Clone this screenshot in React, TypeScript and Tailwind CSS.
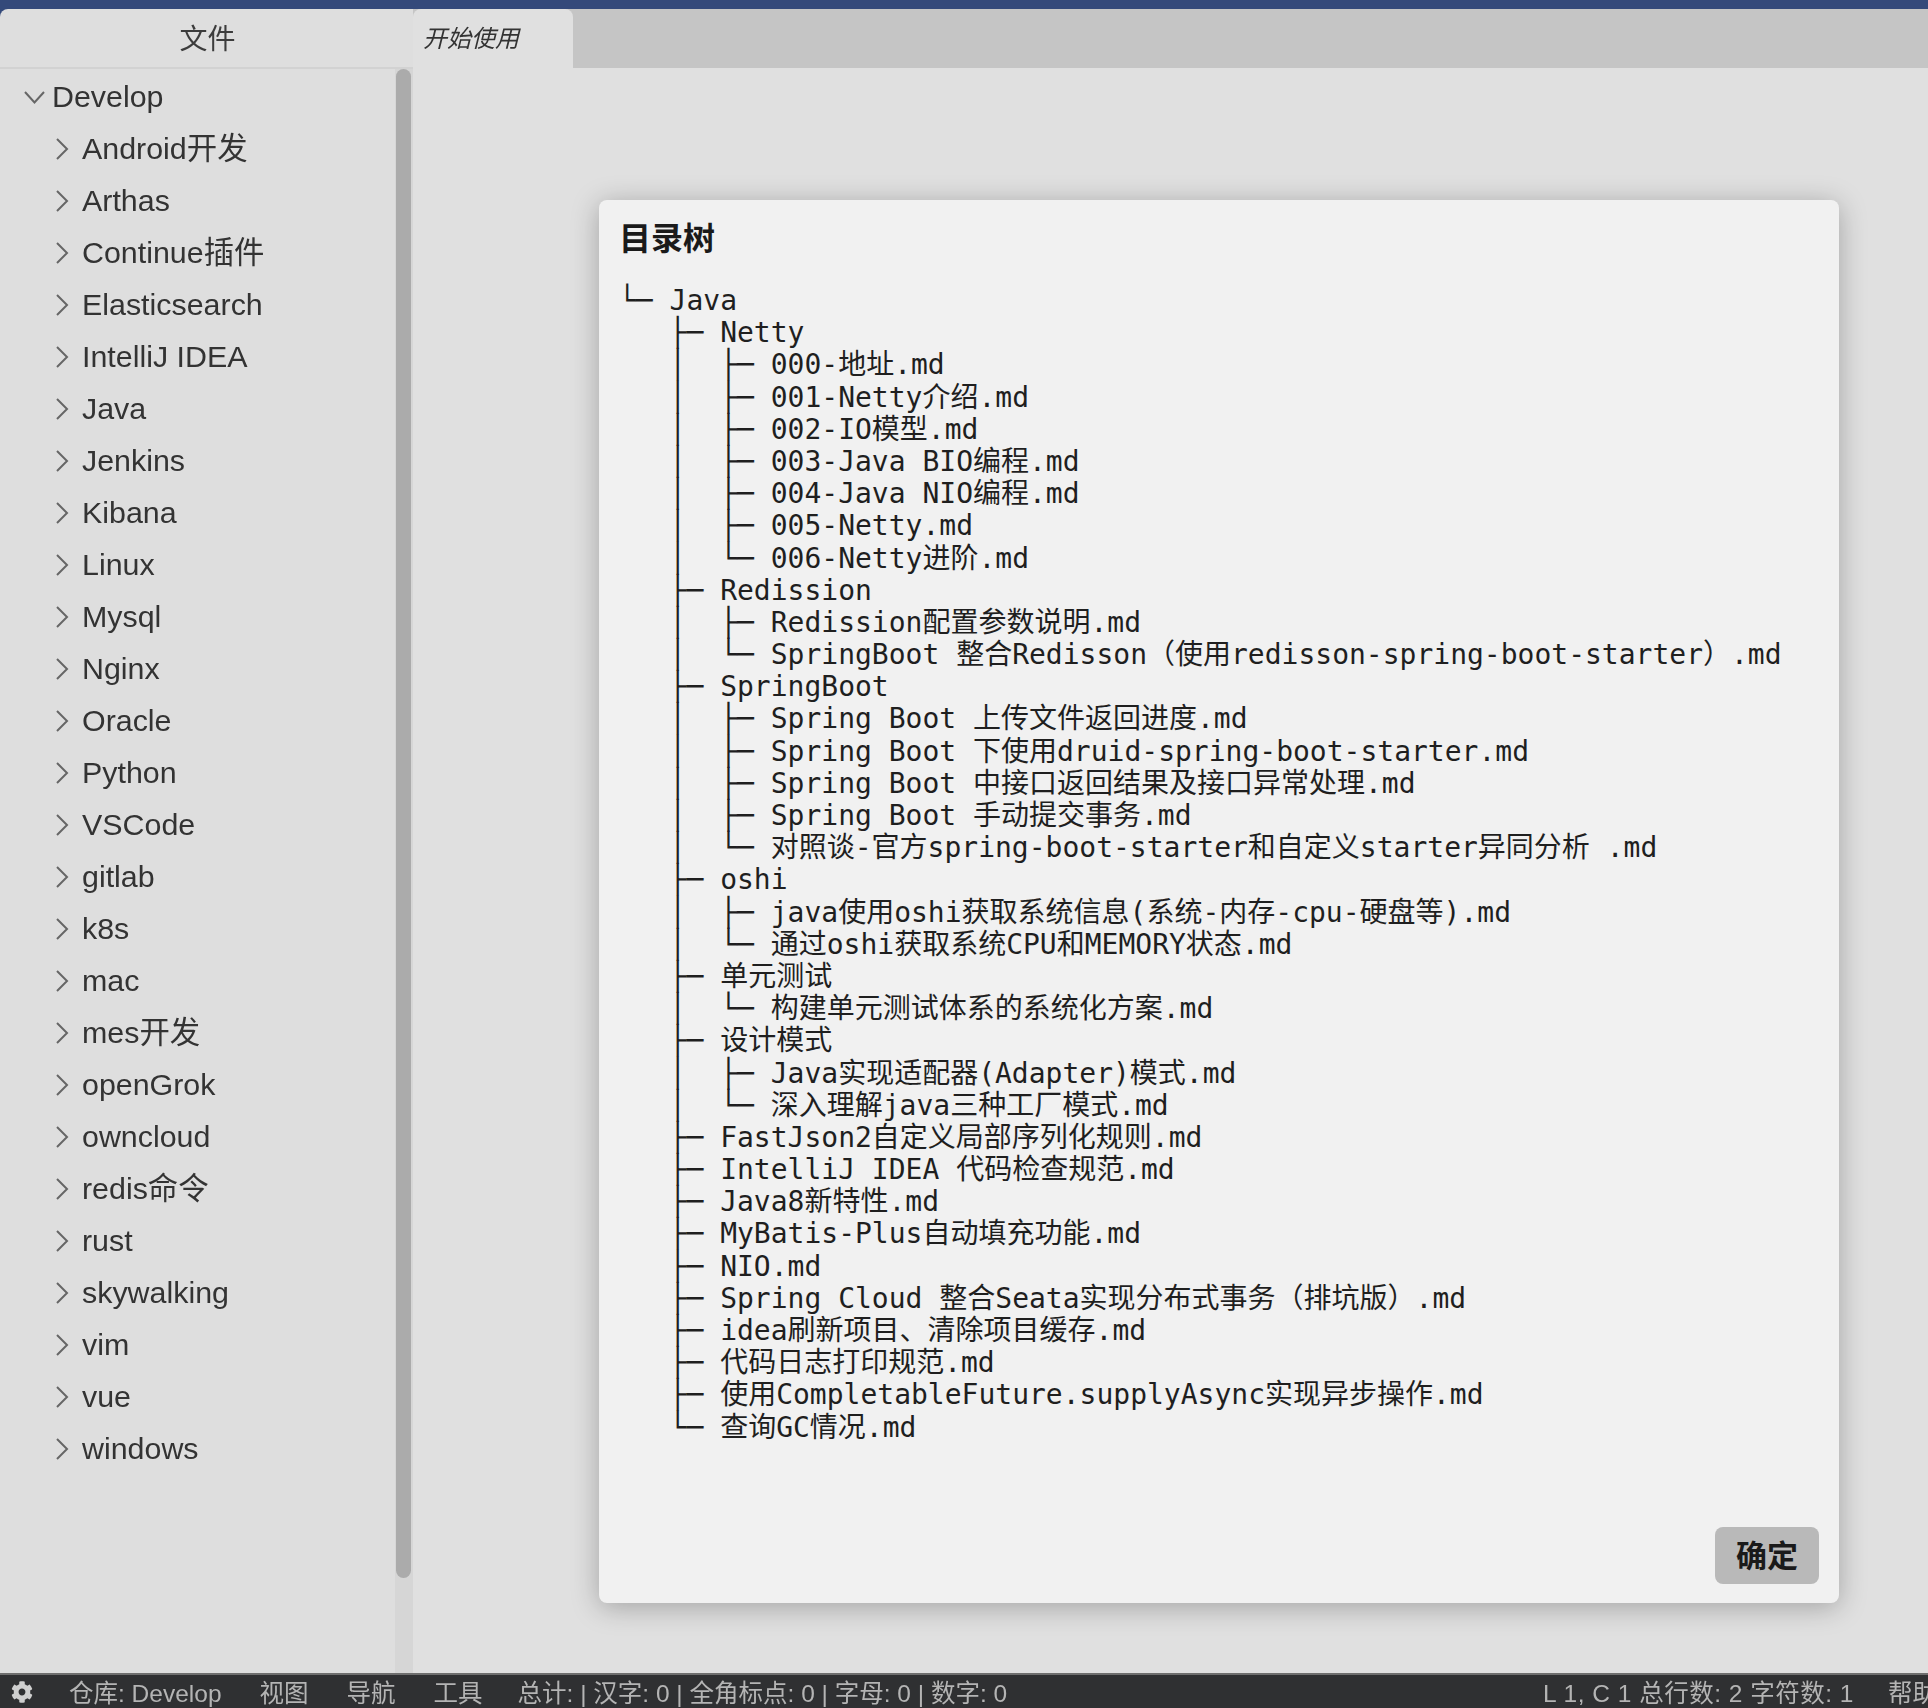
import { FaCog } from "react-icons/fa";

const folders = [
  "Android开发",
  "Arthas",
  "Continue插件",
  "Elasticsearch",
  "IntelliJ IDEA",
  "Java",
  "Jenkins",
  "Kibana",
  "Linux",
  "Mysql",
  "Nginx",
  "Oracle",
  "Python",
  "VSCode",
  "gitlab",
  "k8s",
  "mac",
  "mes开发",
  "openGrok",
  "owncloud",
  "redis命令",
  "rust",
  "skywalking",
  "vim",
  "vue",
  "windows",
];

const tree = [
  "└─ Java",
  "   ├─ Netty",
  "   │  ├─ 000-地址.md",
  "   │  ├─ 001-Netty介绍.md",
  "   │  ├─ 002-IO模型.md",
  "   │  ├─ 003-Java BIO编程.md",
  "   │  ├─ 004-Java NIO编程.md",
  "   │  ├─ 005-Netty.md",
  "   │  └─ 006-Netty进阶.md",
  "   ├─ Redission",
  "   │  ├─ Redission配置参数说明.md",
  "   │  └─ SpringBoot 整合Redisson（使用redisson-spring-boot-starter）.md",
  "   ├─ SpringBoot",
  "   │  ├─ Spring Boot 上传文件返回进度.md",
  "   │  ├─ Spring Boot 下使用druid-spring-boot-starter.md",
  "   │  ├─ Spring Boot 中接口返回结果及接口异常处理.md",
  "   │  ├─ Spring Boot 手动提交事务.md",
  "   │  └─ 对照谈-官方spring-boot-starter和自定义starter异同分析 .md",
  "   ├─ oshi",
  "   │  ├─ java使用oshi获取系统信息(系统-内存-cpu-硬盘等).md",
  "   │  └─ 通过oshi获取系统CPU和MEMORY状态.md",
  "   ├─ 单元测试",
  "   │  └─ 构建单元测试体系的系统化方案.md",
  "   ├─ 设计模式",
  "   │  ├─ Java实现适配器(Adapter)模式.md",
  "   │  └─ 深入理解java三种工厂模式.md",
  "   ├─ FastJson2自定义局部序列化规则.md",
  "   ├─ IntelliJ IDEA 代码检查规范.md",
  "   ├─ Java8新特性.md",
  "   ├─ MyBatis-Plus自动填充功能.md",
  "   ├─ NIO.md",
  "   ├─ Spring Cloud 整合Seata实现分布式事务（排坑版）.md",
  "   ├─ idea刷新项目、清除项目缓存.md",
  "   ├─ 代码日志打印规范.md",
  "   ├─ 使用CompletableFuture.supplyAsync实现异步操作.md",
  "   └─ 查询GC情况.md",
];

const sans = "font-['Liberation_Sans','Noto_Sans_CJK_SC',sans-serif]";

export default function App() {
  return (
    <div className={`flex h-[1708px] w-[1928px] flex-col overflow-hidden bg-[#34497a] ${sans}`}>
      <div className="h-[9px] shrink-0" />
      <div className="flex min-h-0 flex-1">
        {/* file panel */}
        <aside className="flex w-[413px] shrink-0 flex-col rounded-tl-lg bg-[#dedede]">
          <div className="flex h-[60px] shrink-0 items-center justify-center border-b-2 border-[#d2d2d2] pl-[2px] pt-[3px] text-[28px] text-[#3c3c3c] blur-[0.6px]">
            文件
          </div>
          <div className="flex min-h-0 flex-1">
            <div className="min-w-0 flex-1 pt-[2px] text-[#333] blur-[0.6px]">
              <div className="flex h-[52px] items-center pl-[24px] text-[30.4px]">
                <svg viewBox="0 0 21 13" className="mr-[7px] h-[13px] w-[21px] shrink-0 fill-none stroke-[#666] stroke-2">
                  <path d="M1 1 L10.5 11.5 L20 1" />
                </svg>
                Develop
              </div>
              {folders.map((name) => (
                <div key={name} className="flex h-[52px] items-center pl-[55px] text-[30.4px]">
                  <svg viewBox="0 0 14 24" className="mr-[13px] h-[24px] w-[14px] shrink-0 fill-none stroke-[#666] stroke-2">
                    <path d="M2 2 L12 12 L2 22" />
                  </svg>
                  {name}
                </div>
              ))}
            </div>
            <div className="w-[18px] shrink-0 bg-[#d6d6d6] pb-[95px] pl-[1px] pr-[2px]">
              <div className="h-full rounded-full bg-[#ababab]" />
            </div>
          </div>
        </aside>

        {/* editor area */}
        <main className="flex min-w-0 flex-1 flex-col bg-[#e0e0e0]">
          <div className="flex h-[59px] shrink-0 bg-[#c5c5c5]">
            <div className="flex w-[160px] items-center rounded-t-lg bg-[#e0e0e0] pl-[10px] text-[24px] italic text-[#333] blur-[0.6px]">
              开始使用
            </div>
          </div>
          <div className="min-h-0 flex-1 pl-[186px] pt-[132px]">
            <section className="flex h-[1403px] w-[1240px] flex-col rounded-lg bg-[#f1f1f1] pb-[19px] pl-[20px] pr-[20px] pt-[20px] shadow-[0_4px_28px_rgba(0,0,0,0.28)]">
              <h2 className="text-[32px] font-bold leading-[38px] text-[#1a1a1a]">目录树</h2>
              <pre className="mt-[27px] min-h-0 flex-1 font-['DejaVu_Sans_Mono','Noto_Sans_CJK_SC',monospace] text-[28px] leading-[32.18px] text-[#1f1f1f]">
                {tree.join("\n")}
              </pre>
              <div className="flex justify-end">
                <button className="h-[57px] w-[104px] rounded-lg bg-[#b9b9b9] pt-[3px] text-[31px] font-semibold text-[#1a1a1a]">
                  确定
                </button>
              </div>
            </section>
          </div>
        </main>
      </div>

      {/* status bar */}
      <footer className="flex h-[35px] shrink-0 items-center border-t-2 border-[#6e6e6e] bg-[#2f3032] pl-[11px] text-[24.5px] text-[#b4b4b4]">
        <FaCog className="h-[22px] w-[22px] shrink-0 text-[#cfcfcf]" />
        <div className="flex min-w-0 flex-1 items-center whitespace-nowrap pt-[6px] blur-[0.5px]">
          <span className="ml-[36px]">仓库: Develop</span>
          <span className="ml-[38px]">视图</span>
          <span className="ml-[38px]">导航</span>
          <span className="ml-[38px]">工具</span>
          <span className="ml-[35px]">总计: | 汉字: 0 | 全角标点: 0 | 字母: 0 | 数字: 0</span>
          <span className="ml-auto tracking-[0.5px]">L 1, C 1 总行数: 2 字符数: 1</span>
          <span className="ml-[34px] w-[40px] overflow-hidden">帮助</span>
        </div>
      </footer>
    </div>
  );
}
